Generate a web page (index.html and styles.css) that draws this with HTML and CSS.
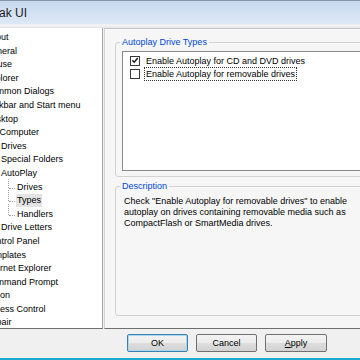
FILE: index.html
```html
<!DOCTYPE html>
<html>
<head>
<meta charset="utf-8">
<link rel="stylesheet" href="styles.css">
</head>
<body>
<div class="window">
  <div class="titlebar"><span class="title">Tweak UI</span></div>
  <div class="main">
    <div class="tree">
      <div class="item l0">About</div>
      <div class="item l0">General</div>
      <div class="item l0">Mouse</div>
      <div class="item l0">Explorer</div>
      <div class="item l0">Common Dialogs</div>
      <div class="item l0">Taskbar and Start menu</div>
      <div class="item l0">Desktop</div>
      <div class="item l0">My Computer</div>
      <div class="item l1">Drives</div>
      <div class="item l1">Special Folders</div>
      <div class="item l1">AutoPlay</div>
      <div class="item l2 first"><span class="txt">Drives</span></div>
      <div class="item l2"><span class="txt sel">Types</span></div>
      <div class="item l2 last"><span class="txt">Handlers</span></div>
      <div class="item l1">Drive Letters</div>
      <div class="item l0">Control Panel</div>
      <div class="item l0">Templates</div>
      <div class="item l0">Internet Explorer</div>
      <div class="item l0">Command Prompt</div>
      <div class="item l0">Logon</div>
      <div class="item l0">Access Control</div>
      <div class="item l0">Repair</div>
    </div>
    <div class="page">
      <div class="group g1">
        <span class="legend">Autoplay Drive Types</span>
        <div class="listbox">
          <div class="row">
            <span class="cb"><svg width="9" height="9" viewBox="0 0 9 9"><path d="M1.5 4.2 L3.6 6.4 L7.6 1.6" fill="none" stroke="#1a1a1a" stroke-width="1.6"/></svg></span>
            <span class="lbl">Enable Autoplay for CD and DVD drives</span>
          </div>
          <div class="row">
            <span class="cb"></span>
            <span class="lbl focus">Enable Autoplay for removable drives</span>
          </div>
        </div>
      </div>
      <div class="group g2">
        <span class="legend">Description</span>
        <p class="desc">Check "Enable Autoplay for removable drives" to enable autoplay on drives containing removable media such as CompactFlash or SmartMedia drives.</p>
      </div>
    </div>
  </div>
  <div class="buttons">
    <button class="btn default">OK</button>
    <button class="btn">Cancel</button>
    <button class="btn"><u>A</u>pply</button>
  </div>
  <div class="bottomline"></div>
</div>
</body>
</html>
```
FILE: styles.css
```css
html, body {
  margin: 0;
  padding: 0;
  width: 360px;
  height: 360px;
  overflow: hidden;
  background: #f0f0f0;
}
.window {
  width: 360px;
  height: 360px;
  overflow: hidden;
  font-family: "Liberation Sans", Arial, sans-serif;
  font-size: 9px;
  color: #000;
}
.titlebar {
  height: 23px;
  border-top: 1px solid #8797ab;
  background: linear-gradient(#c7d8ee, #d5e3f4 60%, #dce8f6);
  display: flex;
  align-items: center;
  overflow: hidden;
}
.title {
  font-size: 12px;
  margin-left: -23px;
  color: #1b1b1b;
  white-space: nowrap;
}
.main {
  margin-top: 3px;
  height: 301px;
  display: flex;
  border-top: 1px solid #e2e6ea;
}
.tree {
  width: 103px;
  flex: none;
  background: #fff;
  border-right: 1px solid #a8a8a8;
  border-bottom: 1px solid #6f6f6f;
  padding-top: 3px;
  overflow: hidden;
  box-sizing: border-box;
}
.item {
  height: 13.6px;
  line-height: 13.6px;
  white-space: nowrap;
  position: relative;
}
.l0 { padding-left: 0; text-indent: -15px; }
.l1 { padding-left: 1px; }
.l2 { padding-left: 16px; }
.l2::before {
  content: "";
  position: absolute;
  left: 8px;
  top: -4px;
  height: 11px;
  border-left: 1px dotted #a0a0a0;
}
.l2.first::before { top: -2px; height: 9px; }
.l2::after {
  content: "";
  position: absolute;
  left: 9px;
  top: 7px;
  width: 6px;
  border-top: 1px dotted #a0a0a0;
}
.txt { padding: 0 1px; display: inline-block; height: 13px; line-height: 13px; }
.sel { background: #e3e3e3; }
.page {
  flex: 1;
  margin-left: 1px;
  background: #f6f6f6;
  border-left: 1px solid #d4d4d4;
  border-top: 1px solid #c8c8c8;
  border-bottom: 1px solid #6f6f6f;
  padding: 13px 0 0 10px;
  overflow: hidden;
  box-sizing: border-box;
}
.group {
  position: relative;
  width: 262px;
  border: 1px solid #d2d2d2;
  border-radius: 3px;
  box-sizing: border-box;
}
.legend {
  position: absolute;
  top: -6px;
  left: 4px;
  padding: 0 2px;
  background: #f6f6f6;
  color: #0046d5;
  line-height: 11px;
  white-space: nowrap;
}
.g1 {
  height: 135px;
  padding: 8px 0 0 6px;
}
.listbox {
  height: 120px;
  background: #fff;
  border: 1px solid #8a8a8a;
  box-sizing: border-box;
  padding: 2px 0 0 7px;
}
.row {
  height: 13.6px;
  display: flex;
  align-items: center;
  white-space: nowrap;
}
.cb {
  width: 10px;
  height: 10px;
  box-sizing: border-box;
  border: 1px solid #3a3a3a;
  background: #fff;
  display: flex;
  align-items: center;
  justify-content: center;
  flex: none;
}
.lbl {
  margin-left: 4px;
  padding: 0 1px;
  line-height: 12px;
  border: 1px solid transparent;
}
.lbl.focus { border: 1px dotted #333; }
.g2 {
  margin-top: 9px;
  height: 130px;
  padding: 9px 0 0 8px;
}
.desc {
  margin: 0;
  width: 232px;
  line-height: 11px;
}
.buttons {
  display: flex;
  gap: 8px;
  padding-left: 127px;
  margin-top: 5px;
  height: 18px;
}
.btn {
  width: 61px;
  height: 18px;
  box-sizing: border-box;
  border: 1px solid #707070;
  border-radius: 2px;
  background: linear-gradient(#f3f3f3, #ececec 48%, #dddddd 52%, #d2d2d2);
  font-family: "Liberation Sans", Arial, sans-serif;
  font-size: 9px;
  color: #000;
  padding: 0;
}
.btn:last-child { width: 62px; }
.btn.default {
  border-color: #3c7fb1;
  box-shadow: inset 0 0 0 1px #a8d8f0;
}
.bottomline {
  margin-top: 6px;
  height: 2px;
  background: #1aa9cf;
}
```
